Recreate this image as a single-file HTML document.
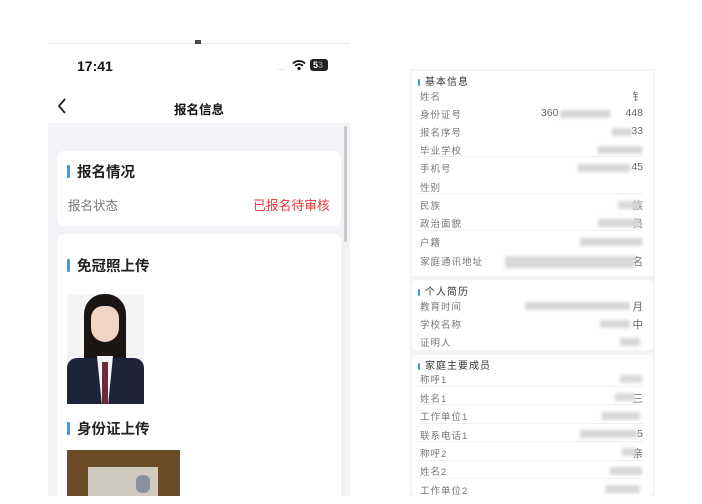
<!DOCTYPE html>
<html><head><meta charset="utf-8"><style>
*{margin:0;padding:0;box-sizing:border-box}
body{width:702px;height:496px;background:#fff;position:relative;overflow:hidden;font-family:"Liberation Sans","Noto Sans CJK SC",sans-serif;color:#333}
.a{position:absolute}
.bar{display:inline-block;width:3px;height:13px;background:#3a9be0;border-radius:1px;vertical-align:-1px;margin-right:7px}
.r{position:absolute;left:420px;width:223px;font-size:9.5px;color:#777;letter-spacing:1px}
.r span{position:absolute;right:0;color:#666;letter-spacing:0;font-size:10.5px}
.blur{position:absolute;height:8px;background:#d8d8d8;filter:blur(1.5px)}
.ln{position:absolute;left:418px;width:225px;height:1px;background:#f0f0f0}
</style></head><body>
<div class="a" style="left:48px;top:43px;width:302px;height:1px;background:#e6e6e6"></div>
<div class="a" style="left:195px;top:40px;width:6px;height:4px;background:#444"></div>
<div class="a" style="left:77px;top:58px;font-size:14px;font-weight:bold;color:#111">17:41</div>
<div class="a" style="left:277px;top:63px;font-size:8px;color:#bbb">....</div>
<svg class="a" style="left:292px;top:59px" width="14" height="12" viewBox="0 0 14 12"><path d="M1 4.5a8.5 8.5 0 0 1 12 0M3.2 6.8a5.5 5.5 0 0 1 7.6 0" stroke="#111" stroke-width="1.8" fill="none"/><circle cx="7" cy="9.5" r="1.6" fill="#111"/></svg>
<div class="a" style="left:310px;top:59px;width:18px;height:12px;background:#222;border-radius:3px;color:#fff;font-size:9px;font-weight:bold;padding-left:3px;line-height:12px">5<span style="color:#888">3</span></div>
<svg class="a" style="left:56px;top:97px" width="12" height="18" viewBox="0 0 12 18"><path d="M9 2L3 9l6 7" stroke="#222" stroke-width="1.8" fill="none"/></svg>
<div class="a" style="left:174px;top:99px;font-size:12.5px;font-weight:bold;color:#111">报名信息</div>
<div class="a" style="left:48px;top:123px;width:302px;height:373px;background:#f1f3f6"></div>
<div class="a" style="left:344px;top:126px;width:3px;height:116px;background:#c8c8c8;border-radius:2px"></div>
<div class="a" style="left:57px;top:151px;width:284px;height:75px;background:#fff;border-radius:7px"></div>
<div class="a" style="left:67px;top:161px;font-size:14.5px;font-weight:bold;color:#222"><i class="bar"></i>报名情况</div>
<div class="a" style="left:68px;top:195px;font-size:12.5px;color:#777">报名状态</div>
<div class="a" style="left:253px;top:195px;font-size:12.8px;color:#e53a3a">已报名待审核</div>
<div class="a" style="left:57px;top:234px;width:284px;height:270px;background:#fff;border-radius:7px"></div>
<div class="a" style="left:67px;top:255px;font-size:14.5px;font-weight:bold;color:#222"><i class="bar"></i>免冠照上传</div>
<div class="a" style="left:67px;top:294px;width:77px;height:110px;background:#f4f4f4;overflow:hidden">
 <div class="a" style="left:17px;top:0;width:42px;height:80px;background:#1b1514;border-radius:20px 20px 4px 4px"></div>
 <div class="a" style="left:24px;top:12px;width:28px;height:36px;background:#f0d4c6;border-radius:12px 12px 14px 14px"></div>
 <div class="a" style="left:0;top:64px;width:77px;height:46px;background:#1d2438;border-radius:10px 10px 0 0"></div>
 <div class="a" style="left:30px;top:62px;width:16px;height:48px;background:#f4f4f4;clip-path:polygon(0 0,100% 0,70% 100%,30% 100%)"></div>
 <div class="a" style="left:35px;top:68px;width:6px;height:42px;background:#6a2a3a"></div>
</div>
<div class="a" style="left:67px;top:418px;font-size:14.5px;font-weight:bold;color:#222"><i class="bar"></i>身份证上传</div>
<div class="a" style="left:67px;top:450px;width:113px;height:46px;background:#6b4a26"></div>
<div class="a" style="left:88px;top:467px;width:70px;height:29px;background:#cfcabf"></div>
<div class="a" style="left:136px;top:475px;width:14px;height:18px;background:#8890a0;border-radius:6px"></div>
<div class="a" style="left:410px;top:69px;width:245px;height:427px;background:#f3f3f3"></div>
<div class="a" style="left:412px;top:71px;width:241px;height:205px;background:#fff"></div>
<div class="a" style="left:412px;top:280px;width:241px;height:70px;background:#fff;border-radius:4px"></div>
<div class="a" style="left:412px;top:355px;width:241px;height:141px;background:#fff;border-radius:4px"></div>
<div class="a" style="left:418px;top:73px;font-size:10px;color:#333;letter-spacing:1px"><i class="bar" style="height:7px;width:2px;margin-right:5px"></i>基本信息</div>
<div class="r" style="top:89px">姓名<span>钅</span></div>
<div class="r" style="top:107px">身份证号<span>360&nbsp;&nbsp;&nbsp;&nbsp;&nbsp;&nbsp;&nbsp;&nbsp;&nbsp;&nbsp;&nbsp;&nbsp;&nbsp;&nbsp;&nbsp;&nbsp;&nbsp;&nbsp;&nbsp;&nbsp;&nbsp;&nbsp;&nbsp;448</span></div>
<div class="r" style="top:125px">报名序号<span>33</span></div>
<div class="r" style="top:143px">毕业学校</div>
<div class="r" style="top:161px">手机号<span>45</span></div>
<div class="r" style="top:180px">性别</div>
<div class="r" style="top:198px">民族<span>族</span></div>
<div class="r" style="top:216px">政治面貌<span>员</span></div>
<div class="r" style="top:235px">户籍</div>
<div class="r" style="top:254px">家庭通讯地址<span>名</span></div>
<div class="blur" style="left:560px;top:110px;width:50px"></div>
<div class="blur" style="left:612px;top:128px;width:20px"></div>
<div class="blur" style="left:598px;top:146px;width:44px"></div>
<div class="blur" style="left:578px;top:164px;width:52px"></div>
<div class="blur" style="left:618px;top:201px;width:22px"></div>
<div class="blur" style="left:598px;top:219px;width:42px"></div>
<div class="blur" style="left:580px;top:238px;width:62px"></div>
<div class="blur" style="left:505px;top:256px;width:130px;height:12px"></div>
<div class="ln" style="top:156px"></div><div class="ln" style="top:193px"></div><div class="ln" style="top:230px"></div>
<div class="a" style="left:418px;top:283px;font-size:10px;color:#333;letter-spacing:1px"><i class="bar" style="height:7px;width:2px;margin-right:5px"></i>个人简历</div>
<div class="r" style="top:299px">教育时间<span>月</span></div>
<div class="r" style="top:317px">学校名称<span>中</span></div>
<div class="r" style="top:335px">证明人</div>
<div class="blur" style="left:525px;top:302px;width:105px"></div>
<div class="blur" style="left:600px;top:320px;width:30px"></div>
<div class="blur" style="left:620px;top:338px;width:20px"></div>
<div class="a" style="left:418px;top:357px;font-size:10px;color:#333;letter-spacing:1px"><i class="bar" style="height:7px;width:2px;margin-right:5px"></i>家庭主要成员</div>
<div class="r" style="top:372px">称呼1</div>
<div class="r" style="top:391px">姓名1<span>三</span></div>
<div class="r" style="top:409px">工作单位1</div>
<div class="r" style="top:428px">联系电话1<span>5</span></div>
<div class="r" style="top:446px">称呼2<span>亲</span></div>
<div class="r" style="top:464px">姓名2</div>
<div class="r" style="top:483px">工作单位2</div>
<div class="blur" style="left:620px;top:375px;width:22px"></div>
<div class="blur" style="left:615px;top:393px;width:20px"></div>
<div class="blur" style="left:602px;top:412px;width:38px"></div>
<div class="blur" style="left:580px;top:430px;width:58px"></div>
<div class="blur" style="left:622px;top:448px;width:14px"></div>
<div class="blur" style="left:610px;top:467px;width:32px"></div>
<div class="blur" style="left:605px;top:485px;width:35px"></div>
<div class="ln" style="top:386px"></div><div class="ln" style="top:404px"></div><div class="ln" style="top:423px"></div><div class="ln" style="top:441px"></div><div class="ln" style="top:460px"></div><div class="ln" style="top:478px"></div>
</body></html>
